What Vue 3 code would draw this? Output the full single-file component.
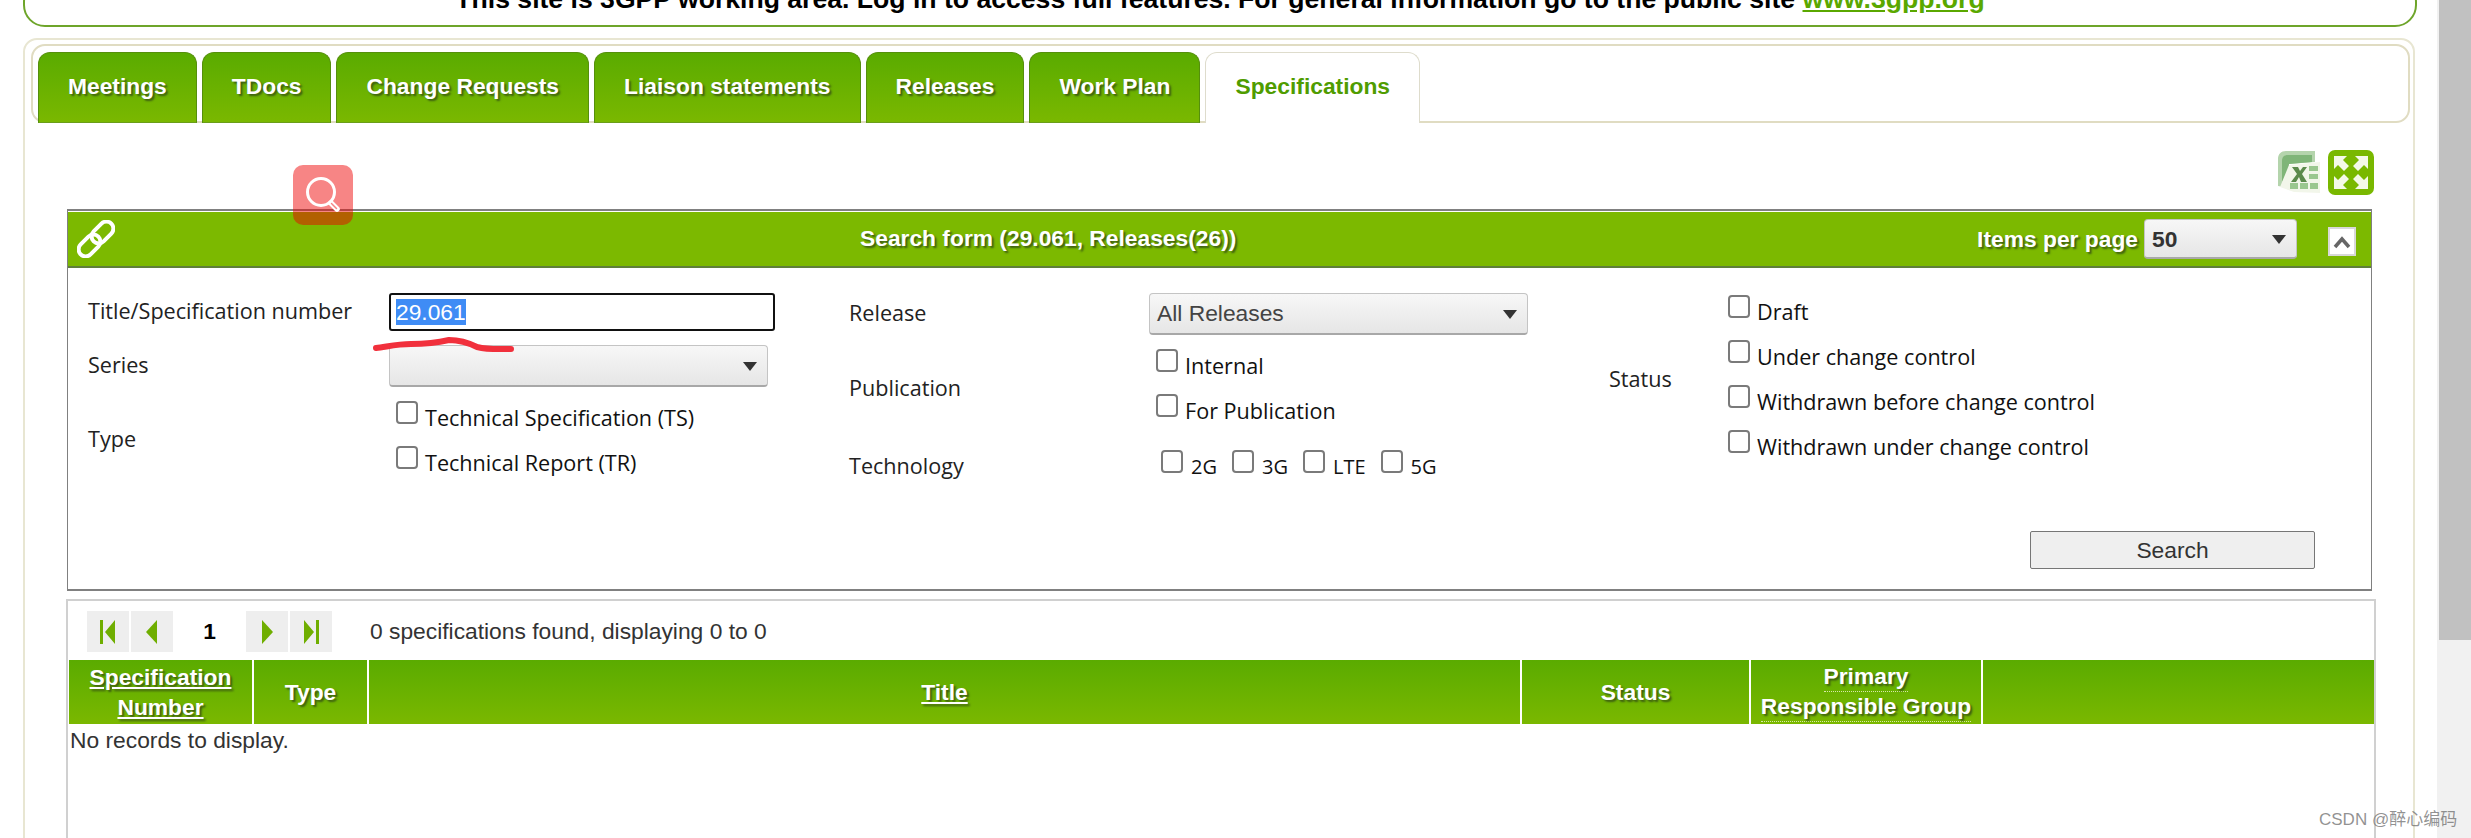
<script setup>
const tabs = ['Meetings', 'TDocs', 'Change Requests', 'Liaison statements', 'Releases', 'Work Plan', 'Specifications']
const typeOptions = ['Technical Specification (TS)', 'Technical Report (TR)']
const publicationOptions = ['Internal', 'For Publication']
const technologies = ['2G', '3G', 'LTE', '5G']
const statuses = ['Draft', 'Under change control', 'Withdrawn before change control', 'Withdrawn under change control']
const columns = [
  { label: ['Specification', 'Number'], link: true, width: 185 },
  { label: ['Type'], width: 115 },
  { label: ['Title'], link: true, width: 1153 },
  { label: ['Status'], width: 229 },
  { label: ['Primary', 'Responsible Group'], dotted: true, width: 232 },
  { label: [], width: 391 }
]
</script>

<template>
  <div class="page">
    <div class="main">
      <div class="banner">
        This site is 3GPP working area. Log in to access full features. For general information go to the public site
        <a class="banner-link">www.3gpp.org</a>
      </div>

      <div class="panel">
        <div class="tabs">
          <div v-for="(tab, i) in tabs" :key="tab" class="tab" :class="{ active: i === tabs.length - 1 }">{{ tab }}</div>
        </div>

        <div class="toolbar">
          <svg class="excel" width="44" height="44" viewBox="0 0 44 44">
            <path d="M1 36V9c0-5 3-8 8-8h29v11L12 14v24z" fill="#b4d4ac" />
            <path d="M5 31V11c0-4 2-6 6-6h24v7L12 14v18z" fill="#7fb578" />
            <path d="M3 37 12 15 43 12V43L17 42z" fill="#f2f6ea" />
            <path d="M15 17h6l2 4 3-4h4l-5 7 5 8h-6l-2-5-3 5h-5l6-8z" fill="#5b8a4c" />
            <path d="M32 16h9v5h-9zM32 24h9v5h-9zM13 33h8v6h-8zM23 33h8v6h-8zM33 33h8v6h-8z" fill="#9ac78f" />
          </svg>
          <svg class="fullscreen" width="46" height="45" viewBox="0 0 46 45">
            <rect width="46" height="45" rx="7" fill="#79b800" />
            <path d="M6 6h13l-4 4 6 6-5 5-6-6-4 4zM40 6H27l4 4-6 6 5 5 6-6 4 4zM6 39h13l-4-4 6-6-5-5-6 6-4-4zM40 39H27l4-4-6-6 5-5 6 6 4-4z" fill="#f4f9e8" />
          </svg>
        </div>

        <div class="search-form">
          <div class="form-head">
            <svg class="link-icon" width="38" height="38" viewBox="0 0 38 38">
              <g fill="none" stroke="#fff" stroke-width="4">
                <rect x="18.5" y="0" width="14" height="25" rx="7" transform="rotate(45 25.5 12.5)" />
                <rect x="5.5" y="13" width="14" height="25" rx="7" transform="rotate(45 12.5 25.5)" />
              </g>
            </svg>
            <div class="form-title">Search form (29.061, Releases(26))</div>
            <div class="per-page">
              <span>Items per page</span>
              <div class="select small"><span class="select-value">50</span></div>
              <div class="collapse">
                <svg width="20" height="14" viewBox="0 0 20 14"><path d="M3 12 10 4l7 8" fill="none" stroke="#666" stroke-width="3.5" /></svg>
              </div>
            </div>
          </div>

          <div class="form-body">
            <div class="form-col first-col">
              <div class="row first">
                <div class="label high">Title/Specification number</div>
                <div class="text-input"><span class="selected">29.061</span></div>
              </div>
              <div class="row series">
                <div class="label high">Series</div>
                <div class="select wide"></div>
              </div>
              <div class="row checks-row">
                <div class="label low">Type</div>
                <div class="checks indent">
                  <label v-for="opt in typeOptions" :key="opt" class="check"><input type="checkbox" /><span>{{ opt }}</span></label>
                </div>
              </div>
            </div>

            <div class="form-col">
              <div class="row first">
                <div class="label high">Release</div>
                <div class="select wide release"><span class="select-value">All Releases</span></div>
              </div>
              <div class="row checks-row pub">
                <div class="label low">Publication</div>
                <div class="checks indent">
                  <label v-for="opt in publicationOptions" :key="opt" class="check"><input type="checkbox" /><span>{{ opt }}</span></label>
                </div>
              </div>
              <div class="row tech">
                <div class="label low">Technology</div>
                <div class="tech-list">
                  <label v-for="t in technologies" :key="t" class="check"><input type="checkbox" /><span>{{ t }}</span></label>
                </div>
              </div>
            </div>

            <div class="form-col col-three">
              <div class="row status-row">
                <div class="label status-label">Status</div>
                <div class="checks">
                  <label v-for="s in statuses" :key="s" class="check"><input type="checkbox" /><span>{{ s }}</span></label>
                </div>
              </div>
            </div>
          </div>

          <div class="search-row">
            <button class="search-btn">Search</button>
          </div>
        </div>

        <div class="grid-box">
          <div class="pager">
            <div class="pager-btn">
              <svg width="20" height="26" viewBox="0 0 20 26"><path d="M2 1h3v24H2zM17 1v24L7 13z" fill="#6fae00" /></svg>
            </div>
            <div class="pager-btn">
              <svg width="14" height="26" viewBox="0 0 14 26"><path d="M12 1v24L1 13z" fill="#6fae00" /></svg>
            </div>
            <div class="page-num">1</div>
            <div class="pager-btn">
              <svg width="14" height="26" viewBox="0 0 14 26"><path d="M2 1v24l11-12z" fill="#6fae00" /></svg>
            </div>
            <div class="pager-btn">
              <svg width="20" height="26" viewBox="0 0 20 26"><path d="M3 1v24l10-12zM15 1h3v24h-3z" fill="#6fae00" /></svg>
            </div>
            <div class="found">0 specifications found, displaying 0 to 0</div>
          </div>

          <div class="table-head">
            <div v-for="(col, i) in columns" :key="i" class="th" :style="{ width: col.width + 'px' }">
              <span v-for="line in col.label" :key="line" :class="{ linked: col.link, dotted: col.dotted }">{{ line }}</span>
            </div>
          </div>
          <div class="no-records">No records to display.</div>
        </div>
      </div>
    </div>

    <div class="scrollbar"><div class="thumb"></div></div>

    <!-- things drawn on top of the page in the screenshot -->
    <div class="search-badge">
      <svg width="36" height="40" viewBox="0 0 36 40">
        <circle cx="16" cy="17" r="13.5" fill="none" stroke="#fff" stroke-width="3" />
        <path d="M26 28l6 6" stroke="#fff" stroke-width="5.5" stroke-linecap="round" />
        <path d="M26.5 28.5l5 5" stroke="#f78585" stroke-width="1.5" stroke-linecap="round" />
      </svg>
    </div>
    <svg class="scribble" width="150" height="20" viewBox="0 0 150 20">
      <path d="M5 12C15 11 25 8 40 8S65 7 78 4c10 0 20 3 28 7 12 3 22 2 34 2" fill="none" stroke="#f1303c" stroke-width="6" stroke-linecap="round" />
    </svg>
    <div class="watermark">CSDN @醉心编码</div>
  </div>
</template>

<style scoped>
* {
  box-sizing: border-box;
}

.page {
  position: relative;
  display: flex;
  width: 2471px;
  height: 838px;
  overflow: hidden;
  background: #fff;
  font-family: "Liberation Sans", Arial, sans-serif;
  color: #333;
}

.main {
  width: 2437px;
  flex: none;
}

.banner {
  margin: -20px 0 0 23px;
  width: 2394px;
  height: 47px;
  border: 2px solid #6ea52a;
  border-radius: 22px;
  text-align: center;
  font-size: 26.6px;
  font-weight: bold;
  line-height: 34px;
  color: #000;
}

.banner-link {
  color: #5aa800;
  text-decoration: underline;
}

.panel {
  margin: 11px 0 0 23px;
  width: 2392px;
  height: 840px;
  border: 2px solid #e8e6d2;
  border-radius: 14px 14px 0 0;
  padding: 4px 3px 0 6px;
}

.tabs {
  display: flex;
  gap: 5px;
  height: 79px;
  padding: 6px 0 0 5px;
  border: 2px solid #e0dcc2;
  border-radius: 14px;
}

.tab {
  height: 71px;
  padding: 0 29px;
  border: 1px solid #558f0c;
  border-bottom-color: #6a9e1a;
  border-radius: 12px 12px 0 0;
  background: linear-gradient(#5aab00, #7ab800);
  color: #fff;
  font-size: 22.8px;
  font-weight: bold;
  line-height: 66px;
  text-shadow: 2px 2px 2px #3d5e10;
}

.tab.active {
  background: #fff;
  border-color: #dedccc;
  border-bottom: none;
  color: #4f9c00;
  text-shadow: none;
}

.toolbar {
  display: flex;
  justify-content: flex-end;
  align-items: flex-start;
  gap: 7px;
  height: 59px;
  margin-top: 27px;
  padding-right: 36px;
}

.excel,
.fullscreen {
  filter: blur(0.6px);
}

.search-form {
  margin-left: 36px;
  width: 2305px;
  height: 382px;
  border: 1px solid #808080;
  border-top-width: 2px;
  border-bottom-width: 2px;
}

.form-head {
  display: flex;
  align-items: center;
  height: 57px;
  background: #7cb900;
  border-top: 1px solid #fff;
  border-bottom: 2px solid #5f7f3a;
  color: #fff;
  font-weight: bold;
  font-size: 22.8px;
  text-shadow: 2px 2px 2px #3d5e10;
}

.link-icon {
  margin-left: 9px;
  flex: none;
}

.form-title {
  flex: none;
  width: 1400px;
  padding-left: 745px;
  padding-bottom: 2px;
  white-space: nowrap;
}

.per-page {
  display: flex;
  align-items: center;
  margin-left: auto;
  padding-right: 15px;
}

.select {
  position: relative;
  border: 1px solid #c4c4c4;
  border-bottom: 2px solid #a8a8a8;
  border-radius: 4px;
  background: linear-gradient(#f7f7f7, #e6e6e6);
  color: #444;
  font-weight: normal;
  text-shadow: none;
}

.select::after {
  content: "";
  position: absolute;
  right: 10px;
  top: 50%;
  margin-top: -4px;
  border: 7px solid transparent;
  border-top: 9px solid #333;
  border-bottom: none;
}

.select-value {
  display: block;
  padding-left: 7px;
  font-size: 22.8px;
  line-height: 38px;
}

.select.small {
  width: 153px;
  height: 40px;
  margin: 0 31px 0 6px;
  font-weight: bold;
  color: #333;
}

.collapse {
  display: flex;
  align-items: center;
  justify-content: center;
  width: 28px;
  height: 29px;
  margin-top: 5px;
  border: 2px solid #d8d8d8;
  background: #fff;
}

.form-body {
  display: grid;
  grid-template-columns: 761px 760px 1fr;
  padding-left: 20px;
  color: #222;
  font-family: "Open Sans", "Noto Sans", sans-serif;
  font-size: 21.6px;
}

.form-col {
  display: flex;
  flex-direction: column;
}

.row {
  display: flex;
  align-items: center;
}

.label {
  flex: none;
  width: 300px;
}

.first-col .label {
  width: 301px;
}

.label.low {
  padding-top: 8px;
}

.label.high {
  padding-bottom: 3px;
}

.row.first {
  margin-top: 25px;
  height: 38px;
}

.row.series {
  margin-top: 14px;
  height: 42px;
}

.row.checks-row {
  margin-top: 13px;
  height: 69px;
}

.text-input {
  width: 386px;
  height: 38px;
  border: 2px solid #111;
  border-radius: 3px;
  padding-left: 5px;
  font-family: "Liberation Sans", sans-serif;
  font-size: 22.8px;
  line-height: 34px;
}

.selected {
  background: #3f8cf5;
  color: #fff;
}

.select.wide {
  width: 379px;
  height: 42px;
  font-family: "Liberation Sans", sans-serif;
}

.select.release {
  align-self: flex-start;
}

.checks {
  display: flex;
  flex-direction: column;
  gap: 22px;
}

.checks.indent {
  margin-left: 7px;
}

.check {
  display: flex;
  align-items: flex-start;
  height: 23px;
  color: #111;
}

.check input {
  appearance: none;
  flex: none;
  width: 22px;
  height: 23px;
  margin: 0 7px 0 0;
  border: 2px solid #7a7a7a;
  border-radius: 4px;
  background: #fff;
}

.check span {
  margin-top: 2px;
  line-height: 30px;
  white-space: nowrap;
}

.row.first:has(.release) {
  height: 42px;
}

.row.pub {
  margin-top: 14px;
  height: 68px;
}

.row.tech {
  margin-top: 33px;
  height: 23px;
}

.tech-list {
  display: flex;
  margin-left: 12px;
  gap: 15px;
}

.tech-list .check input {
  margin-right: 8px;
}

.tech-list .check span {
  font-size: 20px;
}

.col-three {
  padding-top: 27px;
}

.status-row {
  height: 158px;
}

.status-label {
  width: 119px;
  padding-top: 8px;
}

.search-row {
  display: flex;
  justify-content: flex-end;
  padding-right: 56px;
  margin-top: 58px;
}

.search-btn {
  width: 285px;
  height: 38px;
  border: 1px solid #767676;
  border-radius: 2px;
  background: #efefef;
  color: #333;
  font-family: "Liberation Sans", sans-serif;
  font-size: 22.8px;
}

.grid-box {
  margin: 8px 0 0 35px;
  width: 2310px;
  height: 400px;
  border: 2px solid #d0d0d0;
  border-bottom: none;
  padding: 10px 0 0 0;
}

.pager {
  display: flex;
  align-items: center;
  height: 41px;
  padding-left: 19px;
  gap: 2px;
}

.pager-btn {
  display: flex;
  align-items: center;
  justify-content: center;
  width: 42px;
  height: 41px;
  background: #eee;
}

.page-num {
  width: 69px;
  text-align: center;
  font-size: 22.8px;
  font-weight: bold;
  color: #000;
}

.found {
  margin-left: 36px;
  font-size: 22.8px;
}

.table-head {
  display: flex;
  height: 64px;
  margin: 8px 0 0 1px;
  background: linear-gradient(#5aab00, #7ab800);
  color: #fff;
  font-size: 22.8px;
  font-weight: bold;
  text-shadow: 2px 2px 2px #3d5e10;
}

.th {
  display: flex;
  flex-direction: column;
  align-items: center;
  justify-content: center;
  flex: none;
  border-right: 2px solid #fff;
  line-height: 30px;
  white-space: nowrap;
}

.th:last-child {
  border-right: none;
}

.th span.linked {
  text-decoration: underline;
}

.th span.dotted {
  border-bottom: 1px dotted #d8e8a8;
  line-height: 29px;
}

.no-records {
  padding-left: 2px;
  font-size: 22.8px;
  line-height: 32px;
}

.scrollbar {
  flex: 1;
  height: 838px;
  padding-left: 2px;
  background: #f1f1f1;
}

.thumb {
  height: 640px;
  background: #c1c1c1;
}

.search-badge {
  position: absolute;
  left: 293px;
  top: 165px;
  width: 60px;
  height: 60px;
  display: flex;
  align-items: center;
  justify-content: center;
  border-radius: 10px;
  background: rgba(238, 0, 0, 0.48);
}

.scribble {
  position: absolute;
  left: 371px;
  top: 336px;
}

.watermark {
  position: absolute;
  left: 2319px;
  top: 809px;
  color: rgba(110, 110, 110, 0.75);
  font-family: "Liberation Sans", "Noto Sans CJK SC", sans-serif;
  font-size: 17px;
  line-height: 22px;
}
</style>
